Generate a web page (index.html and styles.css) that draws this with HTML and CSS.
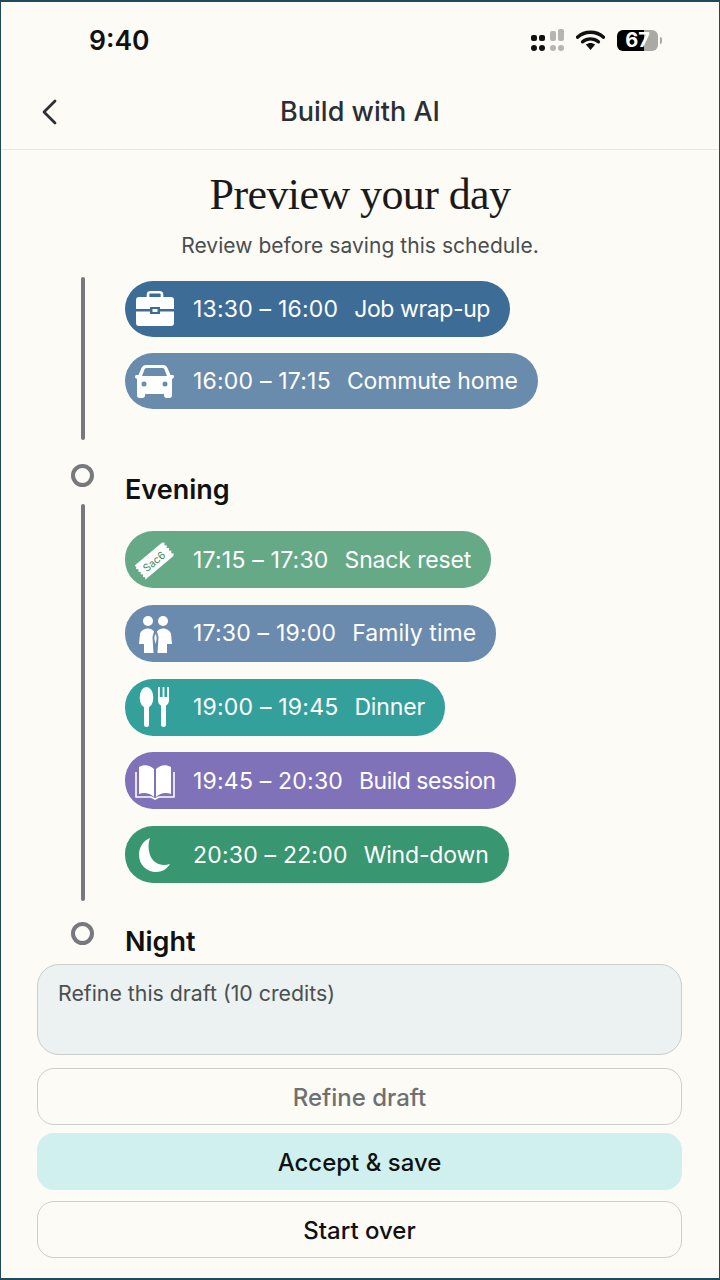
FILE: index.html
```html
<!DOCTYPE html>
<html lang="en">
<head>
  <meta charset="UTF-8">
  <meta name="viewport" content="width=device-width, initial-scale=1.0">
  <title>Build with AI</title>
  <link rel="stylesheet" href="styles.css">
</head>
<body>
  <div class="screen">
    <div class="status-bar">
      <span class="clock">9:40</span>
      <div class="status-icons">
        <svg class="signal" width="33" height="23" viewBox="0 0 33 23">
          <rect x="0" y="6" width="6" height="6" rx="2" fill="#111"/>
          <rect x="8" y="6" width="6" height="6" rx="2" fill="#111"/>
          <rect x="19" y="2" width="6" height="10" rx="2" fill="#b5b5b1"/>
          <rect x="27" y="0" width="6" height="12" rx="2" fill="#b5b5b1"/>
          <rect x="0" y="16" width="6" height="6" rx="3" fill="#111"/>
          <rect x="8" y="16" width="6" height="6" rx="3" fill="#111"/>
          <rect x="19" y="16" width="6" height="6" rx="3" fill="#b5b5b1"/>
          <rect x="27" y="16" width="6" height="6" rx="3" fill="#b5b5b1"/>
        </svg>
        <svg class="wifi" width="29" height="20" viewBox="0 0 29 20">
          <path d="M1.5 7.2C8.8 0.6 20.2 0.6 27.5 7.2" fill="none" stroke="#111" stroke-width="3.4" stroke-linecap="round"/>
          <path d="M6.6 11.8C11.2 7.9 17.8 7.9 22.4 11.8" fill="none" stroke="#111" stroke-width="3.4" stroke-linecap="round"/>
          <path d="M9.8 14.6C12.6 12.4 16.4 12.4 19.2 14.6L14.5 20Z" fill="#111"/>
        </svg>
        <div class="battery"><span>67</span></div>
        <div class="battery-nub"></div>
      </div>
    </div>

    <header class="top-bar">
      <svg class="back" width="16" height="26" viewBox="0 0 16 26">
        <path d="M14 2L3 13L14 24" fill="none" stroke="#2b2f33" stroke-width="2.8" stroke-linecap="round" stroke-linejoin="round"/>
      </svg>
      <h2>Build with AI</h2>
    </header>

    <main class="content">
      <h1>Preview your day</h1>
      <p class="sub">Review before saving this schedule.</p>

      <div class="timeline">
        <!-- afternoon, carried over from above -->
        <div class="group first">
          <div class="rail"></div>
          <div class="pills">
            <div class="pill work">
              <svg class="icon" viewBox="0 0 40 40">
                <path d="M13 8V5.500C13 4 14 3.300 15.500 3.300H24.500C26 3.300 27 4 27 5.500V8" fill="none" stroke="#fff" stroke-width="2.600"/>
                <path d="M1 11C1 9 2 8 4 8H36C38 8 39 9 39 11V20H25V18H15V20H1Z" fill="#fff"/>
                <path d="M1 22.500H15V25H25V22.500H39V34C39 36 38 37 36 37H4C2 37 1 36 1 34Z" fill="#fff"/>
                <rect x="17.500" y="20" width="5" height="3" fill="#fff"/>
              </svg>
              <span class="time">13:30 – 16:00</span><span class="label">Job wrap-up</span>
            </div>
            <div class="pill commute">
              <svg class="icon" viewBox="0 0 40 40">
                <path fill-rule="evenodd" fill="#fff" d="M11 4H28C30 4 31.500 5 32.500 7L35.500 14H37.500C38.500 14 39.500 15 39 16.500L37 18V34.500C37 36 36 37 34.500 37H31.500C30 37 29 36 29 34.500V33H10V34.500C10 36 9 37 7.500 37H4.500C3 37 2 36 2 34.500V18L0 16.500C-.5 15 .5 14 1.500 14H3.500L6.500 7C7.500 5 9 4 11 4ZM11.500 7C10.500 7 10 7.500 9.500 8.500L7 15H32L29.500 8.500C29 7.500 28.500 7 27.500 7ZM9 20.500A2.500 2.500 0 1 0 9 25.500A2.500 2.500 0 1 0 9 20.500ZM30 20.500A2.500 2.500 0 1 0 30 25.500A2.500 2.500 0 1 0 30 20.500Z"/>
              </svg>
              <span class="time">16:00 – 17:15</span><span class="label">Commute home</span>
            </div>
          </div>
        </div>

        <div class="heading-row">
          <div class="dot"></div>
          <h3>Evening</h3>
        </div>

        <div class="group">
          <div class="rail"></div>
          <div class="pills">
            <div class="pill snack">
              <svg class="icon" viewBox="0 0 40 40">
                <g transform="rotate(-40 20 20) translate(2.400 2.400) scale(.88)">
                  <path fill="#fff" d="M-3 10L-1 12L-3 14L-1 16L-3 18L-1 20L-3 22L-1 24L-3 26L-1 28L-3 30H39L41 28L39 26L41 24L39 22L41 20L39 18L41 16L39 14L41 12L39 10Z"/>
                  <text x="18" y="25" text-anchor="middle" class="ticket-text">Sac6</text>
                </g>
              </svg>
              <span class="time">17:15 – 17:30</span><span class="label">Snack reset</span>
            </div>
            <div class="pill family">
              <svg class="icon" viewBox="0 0 40 40">
                <circle cx="13" cy="8" r="5" fill="#fff"/>
                <circle cx="28" cy="8" r="5" fill="#fff"/>
                <path fill="#fff" d="M4 31L5 21C5.500 18 9 15.500 13 15.500C15.500 15.500 17.500 16.500 19 18.500L17.500 24L18.500 40H9V31Z"/>
                <path fill="#fff" d="M37 31L36 21C35.500 18 32 15.500 28 15.500C25.500 15.500 23.500 16.500 22 18.500L23.500 24L22.500 40H32V31Z"/>
                <path fill="#fff" d="M20.500 21C22 23 22 26 20.500 31C19 26 19 23 20.500 21Z"/>
              </svg>
              <span class="time">17:30 – 19:00</span><span class="label">Family time</span>
            </div>
            <div class="pill dinner">
              <svg class="icon" viewBox="0 0 40 40">
                <ellipse cx="11.500" cy="10.500" rx="6.800" ry="10.500" fill="#fff"/>
                <rect x="9" y="16" width="5" height="24" rx="2.500" fill="#fff"/>
                <path fill="#fff" d="M23 0H24.800V10H27.600V0H29.400V10H32.200V0H34V13C34 16 32.500 18 31 18.500V38C31 40.500 26 40.500 26 38V18.500C24.500 18 23 16 23 13Z"/>
              </svg>
              <span class="time">19:00 – 19:45</span><span class="label">Dinner</span>
            </div>
            <div class="pill build">
              <svg class="icon" viewBox="0 0 40 40">
                <path fill="#fff" d="M4 6C9 3 15 4 19 8V36C15 32 9 31 4 33Z"/>
                <path fill="#fff" d="M36 6C31 3 25 4 21 8V36C25 32 31 31 36 33Z"/>
                <path fill="none" stroke="#fff" stroke-width="1.600" d="M1 11V36H16L20 38L24 36H39V11"/>
              </svg>
              <span class="time">19:45 – 20:30</span><span class="label">Build session</span>
            </div>
            <div class="pill wind">
              <svg class="icon" viewBox="0 0 40 40">
                <path fill="#fff" d="M15 3C8 6 4 12 4 20C4 30 12 37 21 37C27 37 32 34 35 29C26 32 18 28 15 20C13 14 13 8 15 3Z"/>
              </svg>
              <span class="time">20:30 – 22:00</span><span class="label">Wind-down</span>
            </div>
          </div>
        </div>

        <div class="heading-row night">
          <div class="dot"></div>
          <h3>Night</h3>
        </div>
      </div>
    </main>

    <footer class="actions">
      <div class="refine-box">Refine this draft (10 credits)</div>
      <button class="btn muted">Refine draft</button>
      <button class="btn primary">Accept &amp; save</button>
      <button class="btn">Start over</button>
    </footer>
  </div>
</body>
</html>
```

FILE: styles.css
```css
* {
  box-sizing: border-box;
}
html, body {
  margin: 0;
  padding: 0;
}
body {
  font-family: Inter, "Noto Sans", sans-serif;
  background-color: #fcfbf6;
}
.screen {
  width: 720px;
  height: 1280px;
  display: flex;
  flex-direction: column;
  overflow: hidden;
  border: 1px solid #1f4a5c;
  border-width: 2px 1px;
  background-color: #fcfbf6;
}

/* status bar */
.status-bar {
  height: 78px;
  flex: none;
  display: flex;
  align-items: center;
  justify-content: space-between;
  padding: 0 57px 2px 88px;
}
.clock {
  font-size: 26.5px;
  font-weight: 600;
  color: #111;
}
.status-icons {
  display: flex;
  align-items: center;
}
.wifi {
  margin-left: 12px;
}
.battery {
  width: 41px;
  height: 21px;
  margin-left: 12px;
  border-radius: 6px;
  background: linear-gradient(90deg, #000 66%, #a9a9a5 66%);
  color: #fff;
  font-size: 20px;
  font-weight: 700;
  line-height: 21px;
  text-align: center;
}
.battery-nub {
  width: 2px;
  height: 7px;
  margin-left: 2px;
  border-radius: 0 2px 2px 0;
  background-color: #a9a9a5;
}

/* top bar */
.top-bar {
  height: 70px;
  flex: none;
  display: grid;
  grid-template-columns: 1fr auto 1fr;
  align-items: center;
  padding: 0 40px;
  border-bottom: 1px solid #e8e7e2;
}
.top-bar h2 {
  margin: 0 0 6px;
  font-size: 27px;
  font-weight: 500;
  color: #2b2f33;
}
.back {
  margin-bottom: 6px;
}

/* scrolling middle */
.content {
  flex: 1;
  min-height: 0;
  overflow: hidden;
  padding-top: 17px;
}
h1 {
  margin: 0;
  font-family: "Liberation Serif", serif;
  font-size: 44px;
  line-height: 56px;
  font-weight: 400;
  letter-spacing: -0.6px;
  color: #1a1a1a;
  text-align: center;
}
.sub {
  margin: 8px 0 0;
  font-size: 21px;
  line-height: 30px;
  letter-spacing: 0.05px;
  color: #4a4d4f;
  text-align: center;
}
.timeline {
  padding: 16px 0 0 70px;
}
.group {
  display: grid;
  grid-template-columns: 23px 1fr;
  column-gap: 31px;
}
.rail {
  width: 4px;
  margin: 0 auto;
  border-radius: 3px;
  background-color: #77797c;
}
.pills {
  display: flex;
  flex-direction: column;
  align-items: flex-start;
  gap: 16.75px;
  padding: 27px 0 18px;
}
.group.first .pills {
  gap: 16px;
  padding: 4px 0 31px;
}
.group.first .pill {
  height: 56px;
}
.pill {
  height: 57px;
  display: flex;
  align-items: center;
  padding: 0 20px 0 10px;
  border-radius: 28px;
  color: #fff;
  font-size: 23px;
  white-space: nowrap;
}
.icon {
  width: 40px;
  height: 40px;
  flex: none;
  margin-right: 18px;
}
.time {
  margin-right: 16px;
  letter-spacing: 0.2px;
}
.label {
  letter-spacing: -0.15px;
}
.work .label {
  letter-spacing: -0.4px;
}
.build .label {
  letter-spacing: -0.5px;
}
.family .label {
  letter-spacing: 0.05px;
}
.ticket-text {
  font-size: 12px;
  fill: #3f8a6a;
  font-family: Inter, sans-serif;
}
.work { background-color: #3d6c97; }
.commute { background-color: #6a8cac; }
.snack { background-color: #66a986; }
.family { background-color: #6b8bae; }
.dinner { background-color: #34a09c; }
.build { background-color: #7f72b9; }
.wind { background-color: #389670; }

.heading-row {
  display: grid;
  grid-template-columns: 23px 1fr;
  column-gap: 31px;
  height: 64px;
}
.dot {
  width: 23px;
  height: 23px;
  margin-top: 24px;
  border: 4px solid #77797c;
  border-radius: 50%;
}
.night .dot {
  margin-top: 21px;
}
.heading-row h3 {
  margin: 33px 0 0;
  font-size: 27px;
  line-height: 34px;
  font-weight: 600;
  color: #111;
}
.night h3 {
  margin-top: 24px;
}

/* bottom actions */
.actions {
  flex: none;
  display: flex;
  flex-direction: column;
  padding: 0 37px 20px 36px;
}
.refine-box {
  height: 91px;
  padding: 15px 20px;
  border: 1.5px solid #c9cfcd;
  border-radius: 22px;
  background-color: #ecf2f1;
  font-size: 21.3px;
  color: #4a4f50;
}
.btn {
  height: 57px;
  margin-top: 8px;
  padding-top: 2px;
  border: 1.5px solid #cfcfca;
  border-radius: 17px;
  background-color: #fcfbf6;
  font-family: inherit;
  font-size: 24px;
  font-weight: 500;
  color: #111;
}
.btn.muted {
  margin-top: 13px;
  color: #6f7070;
}
.btn.primary {
  border: none;
  background-color: #d0f0ef;
  margin-bottom: 3px;
}
```
